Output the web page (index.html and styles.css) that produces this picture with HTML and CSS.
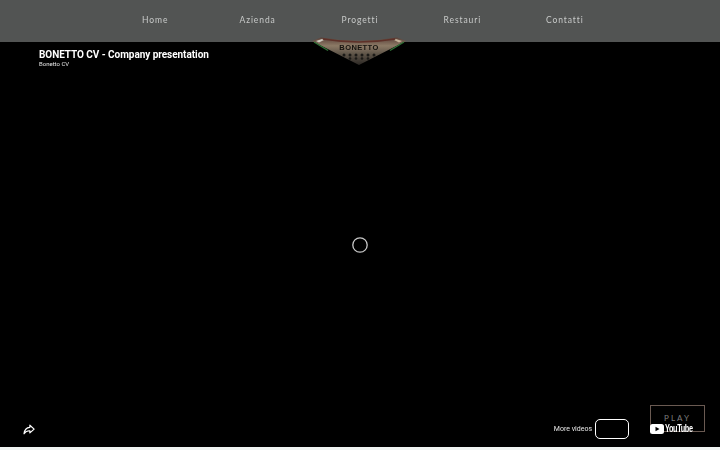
FILE: index.html
```html
<!DOCTYPE html>
<html lang="it">
<head>
    <meta charset="UTF-8" />
    <title>Bonetto</title>
    <link rel="stylesheet" href="styles.css">
</head>
<body>
<div class="nav">
    <a href="#">Home</a>
    <a href="#">Azienda</a>
    <a href="#">Progetti</a>
    <a href="#">Restauri</a>
    <a href="#">Contatti</a>
</div>

<!-- logo sits over the nav edge -->
<svg class="logo" width="100" height="32" viewBox="0 0 100 32">
    <defs>
        <linearGradient id="plate" x1="0" y1="0" x2="0" y2="1">
            <stop offset="0" stop-color="#5a4038" />
            <stop offset="0.3" stop-color="#8c7a66" />
            <stop offset="0.6" stop-color="#5e5448" />
            <stop offset="1" stop-color="#2c2824" />
        </linearGradient>
    </defs>
    <path d="M3 5 L12 1.500 Q50 8 88 1.500 L97 5 L50 29 Z" fill="url(#plate)" />
    <path d="M5 6 L19 14.500" stroke="#2f7236" stroke-width="1.400" fill="none" />
    <path d="M95 6 L81 14.500" stroke="#2f7236" stroke-width="1.400" fill="none" />
    <path d="M7 5 L13 3 L15 4 L10 6.500 Z" fill="#cfcbc0" />
    <path d="M93 5 L87 3 L85 4 L90 6.500 Z" fill="#c4b39a" />
    <path d="M14 3 Q50 9 86 3" stroke="#5e3028" stroke-width="1.400" fill="none" />
    <text class="logo-text" x="50" y="14">BONETTO</text>
    <g fill="#1c1a17">
        <circle cx="35" cy="19" r="1.500" />
        <circle cx="41" cy="19" r="1.500" />
        <circle cx="47" cy="19" r="1.500" />
        <circle cx="53" cy="19" r="1.500" />
        <circle cx="59" cy="19" r="1.500" />
        <circle cx="65" cy="19" r="1.500" />
        <circle cx="41" cy="22.500" r="1.300" />
        <circle cx="47" cy="22.500" r="1.300" />
        <circle cx="53" cy="22.500" r="1.300" />
        <circle cx="59" cy="22.500" r="1.300" />
    </g>
</svg>

<div class="video">
    <div class="video-top">
        <div class="video-title">BONETTO CV - Company presentation</div>
        <div class="video-channel">Bonetto CV</div>
    </div>

    <svg class="spinner" width="16" height="16" viewBox="0 0 16 16">
        <circle cx="8" cy="8" r="7.200" fill="none" stroke="#c8c8c8" stroke-width="1.300" />
    </svg>

    <div class="video-bottom">
        <svg class="share" width="12" height="11" viewBox="0 0 14 12">
            <path d="M8 1 L13 5.500 L8 10 L8 7.500 C5 7.300 3 8.300 1.200 11 C1.600 7 3.800 3.800 8 3.500 Z" fill="none" stroke="#fff" stroke-width="1.400" stroke-linejoin="round" />
        </svg>
        <div class="more">
            <span class="more-label">More videos</span>
            <div class="more-box"></div>
            <div class="yt">
                <div class="play">PLAY</div>
                <div class="yt-logo">
                    <svg width="14" height="10" viewBox="0 0 14 10">
                        <rect width="14" height="10" rx="2.500" fill="#fff" />
                        <path d="M5.500 2.800 L9.500 5 L5.500 7.200 Z" fill="#000" />
                    </svg>
                    <span class="yt-word">YouTube</span>
                </div>
            </div>
        </div>
    </div>
</div>
<div class="strip"></div>
</body>
</html>
```

FILE: styles.css
```css
html, body {
    margin: 0;
    padding: 0;
}
body {
    width: 720px;
    height: 450px;
    overflow: hidden;
    background: #f1f5f3;
    font-family: "Roboto", sans-serif;
}
.nav {
    height: 42px;
    background: #525453;
    display: grid;
    grid-template-columns: repeat(5, 102.4px);
    justify-content: center;
    align-items: center;
    padding-bottom: 2px;
    box-sizing: border-box;
}
.nav a {
    color: #c8cac9;
    text-align: center;
    text-decoration: none;
    font-family: "Lato", sans-serif;
    font-size: 8.500px;
    letter-spacing: 0.900px;
    filter: blur(0.25px);
}
.logo {
    position: absolute;
    left: 309px;
    top: 36px;
    z-index: 2;
    filter: blur(0.5px);
}
.logo-text {
    font-family: "Liberation Sans", sans-serif;
    font-size: 7.500px;
    font-weight: bold;
    letter-spacing: 0.4px;
    text-anchor: middle;
    fill: #16130f;
}
.video {
    height: 405px;
    background: #000;
    display: flex;
    flex-direction: column;
    justify-content: space-between;
    position: relative;
}
.video-top {
    padding: 6px 0 0 39px;
    color: #fff;
    filter: blur(0.2px);
}
.video-title {
    font-size: 10px;
    font-weight: 700;
    letter-spacing: -0.05px;
    line-height: 14px;
}
.video-channel {
    font-size: 6px;
    line-height: 8px;
    margin-top: -2px;
    color: #e6e6e6;
}
.spinner {
    position: absolute;
    left: 352px;
    top: 195px;
}
.video-bottom {
    display: flex;
    justify-content: space-between;
    align-items: flex-end;
    padding: 0 15px 8px 23px;
}
.share {
    margin-bottom: 4px;
}
.more {
    display: flex;
    align-items: flex-end;
}
.more-label {
    color: #e8e8e8;
    font-size: 7px;
    line-height: 10px;
    margin-bottom: 5px;
    margin-right: 3px;
    filter: blur(0.2px);
}
.more-box {
    width: 32px;
    height: 18px;
    border: 1px solid #fff;
    border-radius: 5px;
    margin-right: 21px;
}
.yt {
    position: relative;
    width: 55px;
    height: 27px;
    margin-bottom: 7px;
}
.play {
    box-sizing: border-box;
    height: 27px;
    border: 1px solid #6a5a52;
    color: #7c7c7c;
    text-align: center;
    font-family: "Lato", sans-serif;
    font-size: 8px;
    letter-spacing: 2px;
    line-height: 25px;
}
.yt-logo {
    position: absolute;
    left: 0;
    top: 19px;
    display: flex;
    align-items: center;
    gap: 1px;
    color: #fff;
    font-family: "Liberation Sans", sans-serif;
    font-size: 10px;
    font-weight: bold;
    letter-spacing: -0.5px;
    line-height: 10px;
}
.yt-word {
    transform: scaleX(0.73);
    transform-origin: left center;
}
.strip {
    height: 3px;
}
```
